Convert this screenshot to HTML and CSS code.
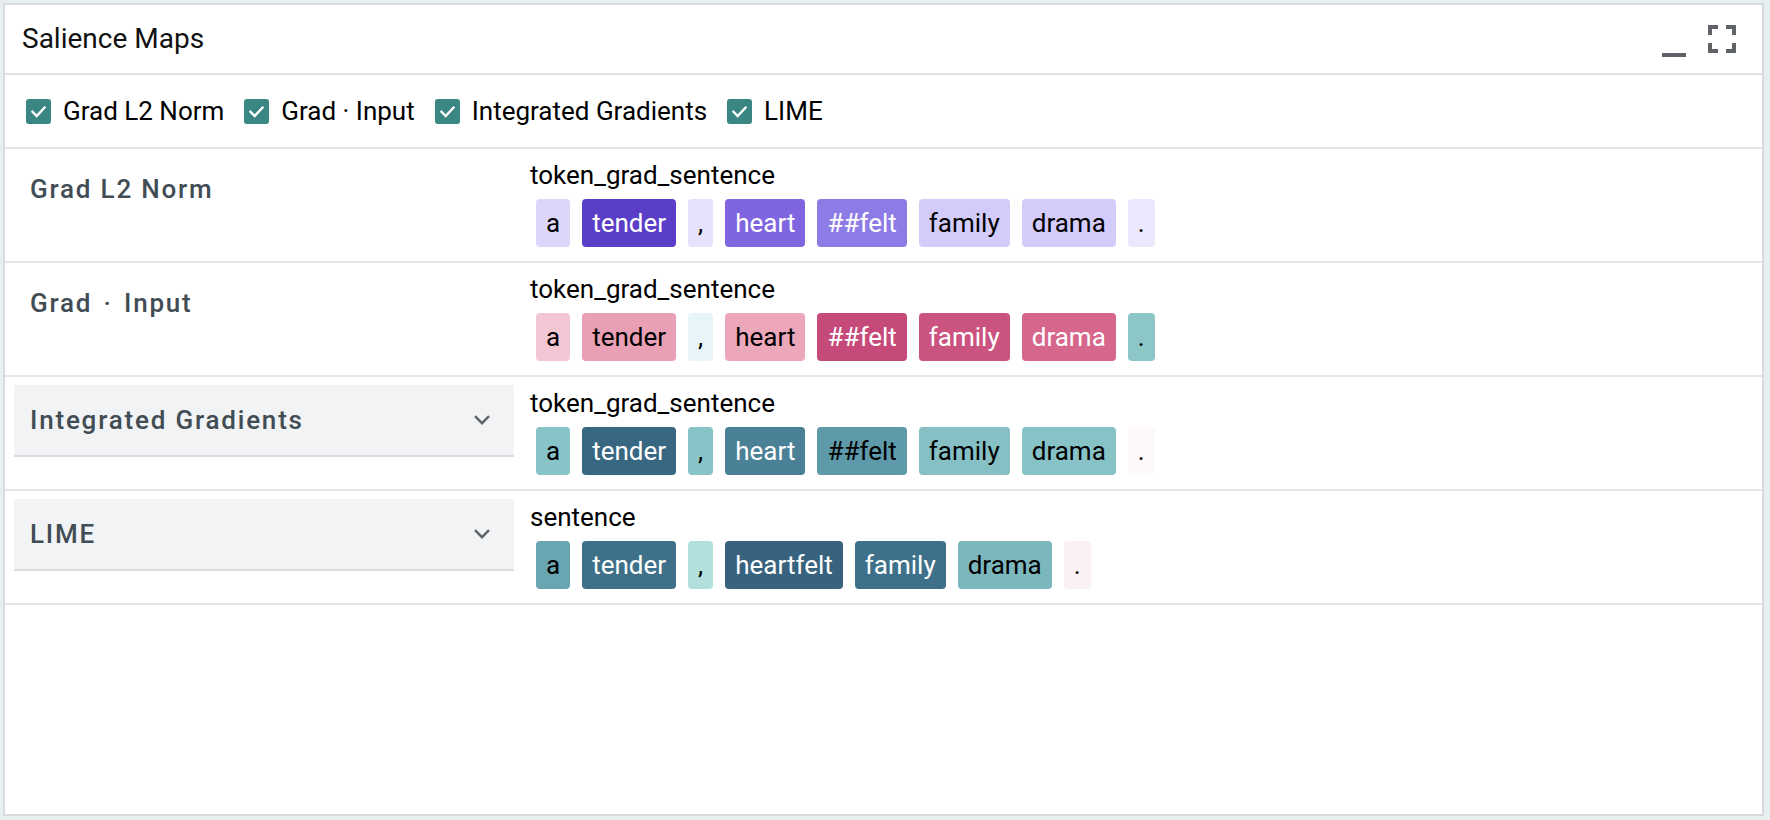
FILE: index.html
```html
<!DOCTYPE html>
<html>
<head>
<meta charset="utf-8">
<link rel="stylesheet" href="styles.css">
</head>
<body>
<div class="panel">
  <div class="header">
    <div class="title">Salience Maps</div>
    <div class="icons">
      <svg class="icon" viewBox="0 0 24 24" width="48" height="48"><path d="M6 19h12v2H6z"/></svg>
      <svg class="icon" viewBox="0 0 24 24" width="48" height="48"><path d="M7 14H5v5h5v-2H7v-3zm-2-4h2V7h3V5H5v5zm12 7h-3v2h5v-5h-2v3zM14 5v2h3v3h2V5h-5z"/></svg>
    </div>
  </div>
  <div class="checks">
    <label class="check"><svg class="cb" viewBox="0 0 25 25" width="25" height="25"><rect width="25" height="25" rx="3"/><path d="M6.5 12.8l4.2 4.2 7.8-8.4"/></svg><span>Grad L2 Norm</span></label>
    <label class="check"><svg class="cb" viewBox="0 0 25 25" width="25" height="25"><rect width="25" height="25" rx="3"/><path d="M6.5 12.8l4.2 4.2 7.8-8.4"/></svg><span>Grad · Input</span></label>
    <label class="check"><svg class="cb" viewBox="0 0 25 25" width="25" height="25"><rect width="25" height="25" rx="3"/><path d="M6.5 12.8l4.2 4.2 7.8-8.4"/></svg><span>Integrated Gradients</span></label>
    <label class="check"><svg class="cb" viewBox="0 0 25 25" width="25" height="25"><rect width="25" height="25" rx="3"/><path d="M6.5 12.8l4.2 4.2 7.8-8.4"/></svg><span>LIME</span></label>
  </div>

  <div class="row">
    <div class="method plain"><span class="mname">Grad L2 Norm</span></div>
    <div class="field">
      <div class="fname">token_grad_sentence</div>
      <div class="tokens">
        <span class="tok" style="background:#dcd7fa">a</span>
        <span class="tok light" style="background:#5b3ec8">tender</span>
        <span class="tok" style="background:#e6e2fc">,</span>
        <span class="tok light" style="background:#7f66e0">heart</span>
        <span class="tok light" style="background:#8e7ce6">##felt</span>
        <span class="tok" style="background:#d3ccfa">family</span>
        <span class="tok" style="background:#d3ccfa">drama</span>
        <span class="tok" style="background:#ebe8fd">.</span>
      </div>
    </div>
  </div>

  <div class="row">
    <div class="method plain"><span class="mname">Grad <span class="dot">·</span> Input</span></div>
    <div class="field">
      <div class="fname">token_grad_sentence</div>
      <div class="tokens">
        <span class="tok" style="background:#f3c6d3">a</span>
        <span class="tok" style="background:#e9a0b5">tender</span>
        <span class="tok" style="background:#e7f5fa">,</span>
        <span class="tok" style="background:#eca7bb">heart</span>
        <span class="tok light" style="background:#c54a7a">##felt</span>
        <span class="tok light" style="background:#cb537f">family</span>
        <span class="tok light" style="background:#d6668c">drama</span>
        <span class="tok" style="background:#8cc6c7">.</span>
      </div>
    </div>
  </div>

  <div class="row">
    <div class="method expand"><span class="mname">Integrated Gradients</span><svg class="chev" viewBox="0 0 16 10" width="16" height="10"><path d="M1 1.2l7 7 7-7"/></svg></div>
    <div class="field">
      <div class="fname">token_grad_sentence</div>
      <div class="tokens">
        <span class="tok" style="background:#87c3c7">a</span>
        <span class="tok light" style="background:#386782">tender</span>
        <span class="tok" style="background:#87c3c7">,</span>
        <span class="tok light" style="background:#4a8196">heart</span>
        <span class="tok" style="background:#5e9aa9">##felt</span>
        <span class="tok" style="background:#86c0c5">family</span>
        <span class="tok" style="background:#87c3c6">drama</span>
        <span class="tok" style="background:#fdf8fa">.</span>
      </div>
    </div>
  </div>

  <div class="row">
    <div class="method expand"><span class="mname">LIME</span><svg class="chev" viewBox="0 0 16 10" width="16" height="10"><path d="M1 1.2l7 7 7-7"/></svg></div>
    <div class="field">
      <div class="fname">sentence</div>
      <div class="tokens">
        <span class="tok" style="background:#6aa6b1">a</span>
        <span class="tok light" style="background:#3e7189">tender</span>
        <span class="tok" style="background:#b2e0dc">,</span>
        <span class="tok light" style="background:#38637f">heartfelt</span>
        <span class="tok light" style="background:#3e7189">family</span>
        <span class="tok" style="background:#7cb7be">drama</span>
        <span class="tok" style="background:#fbf1f5">.</span>
      </div>
    </div>
  </div>
</div>
</body>
</html>
```

FILE: styles.css
```css
html, body {
  margin: 0;
  padding: 0;
}
body {
  background: #e8eff1;
  padding: 3px 6px 4px 3px;
  font-family: Roboto, "Liberation Sans", sans-serif;
  color: #000;
}
.panel {
  box-sizing: border-box;
  width: 1761px;
  height: 813px;
  background: #fff;
  border: 2px solid #d7dadf;
}
.header {
  height: 68px;
  display: flex;
  align-items: center;
  justify-content: space-between;
  padding: 0 16px 0 17px;
  border-bottom: 2px solid #dfe1e5;
}
.title {
  font-size: 28px;
  line-height: 32px;
  color: #111;
}
.icons {
  display: flex;
  align-items: center;
}
.icon {
  display: block;
  fill: #5f6368;
}
.checks {
  height: 72px;
  display: flex;
  align-items: center;
  padding-left: 21px;
  gap: 20px;
  border-bottom: 2px solid #e4e5ea;
}
.check {
  display: flex;
  align-items: center;
  gap: 12px;
  font-size: 26px;
  line-height: 30px;
}
.cb {
  display: block;
}
.cb rect {
  fill: #3a8683;
}
.cb path {
  fill: none;
  stroke: #fff;
  stroke-width: 2.4;
  stroke-linecap: square;
}
.row {
  display: flex;
  align-items: flex-start;
  padding: 8px 0 14px 9px;
  border-bottom: 2px solid #e4e5ea;
}
.method {
  box-sizing: border-box;
  width: 500px;
  height: 72px;
  flex: none;
  display: flex;
  align-items: center;
  justify-content: space-between;
  padding: 0 24px 0 16px;
  margin-right: 16px;
  border-bottom: 2px solid transparent;
}
.method.plain {
  height: 66px;
}
.method.expand {
  background: #f1f3f4;
  border-bottom-color: #dadce0;
}
.mname {
  font-size: 26px;
  font-weight: 500;
  letter-spacing: 1.8px;
  color: #414c54;
}
.dot {
  margin: 0 3px;
}
.chev {
  display: block;
}
.chev path {
  fill: none;
  stroke: #5f6368;
  stroke-width: 2.4;
}
.field {
  flex: 1;
  padding-top: 2px;
}
.fname {
  font-size: 26px;
  line-height: 32px;
  margin-bottom: 8px;
}
.tokens {
  display: flex;
  flex-wrap: wrap;
}
.tok {
  height: 48px;
  line-height: 48px;
  padding: 0 10px;
  margin: 0 6px;
  border-radius: 4px;
  font-size: 26px;
  color: #000;
}
.tok.light {
  color: #fff;
}
```
